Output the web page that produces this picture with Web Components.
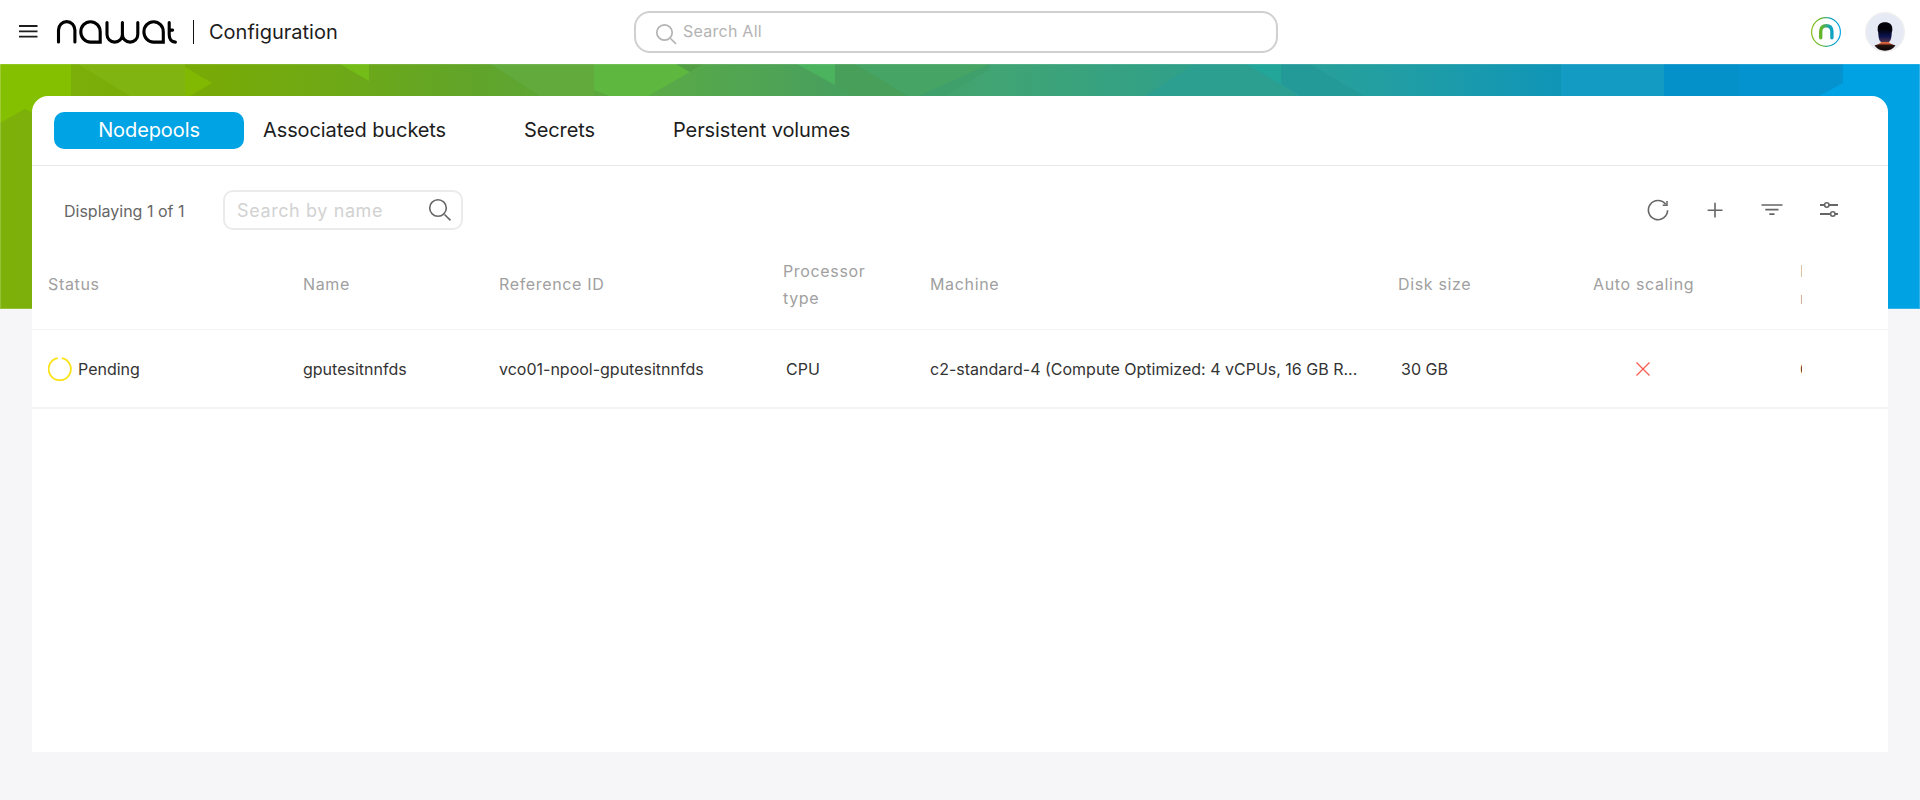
<!DOCTYPE html>
<html lang="en">
<head>
<meta charset="utf-8">
<title>Configuration</title>
<style>
html,body{margin:0;height:100%}
body{font-family:Inter,"Liberation Sans",sans-serif;background:#f6f6f9;overflow:hidden}
</style>
</head>
<body>
<app-shell>
  <app-header slot="header" heading="Configuration"></app-header>
  <brand-banner slot="banner"></brand-banner>
  <content-card>
    <tab-bar slot="tabs">
      <tab-item active style="width:190px">Nodepools</tab-item>
      <tab-item style="width:242px">Associated buckets</tab-item>
      <tab-item style="width:130px">Secrets</tab-item>
      <tab-item style="width:216px">Persistent volumes</tab-item>
    </tab-bar>
    <list-toolbar></list-toolbar>
    <pool-table></pool-table>
  </content-card>
</app-shell>
<script>
const define = (name, html) => customElements.define(name, class extends HTMLElement {
  connectedCallback() {
    if (this.shadowRoot) return;
    const t = document.createElement('template');
    t.innerHTML = typeof html === 'function' ? html(this) : html;
    this.attachShadow({ mode: 'open' }).append(t.content.cloneNode(true));
  }
});

define('app-shell', `
<style>
:host{display:grid;grid-template:64px 245px 1fr/1fr;height:800px}
.header{grid-area:1/1}
.banner{grid-area:2/1;display:grid}
.main{grid-area:2/1/4/2;padding:32px 32px 48px;display:grid;z-index:1}
</style>
<div class="header"><slot name="header"></slot></div>
<div class="banner"><slot name="banner"></slot></div>
<div class="main"><slot></slot></div>`);

define('brand-logo', `
<style>:host{display:block;width:122px;height:26px}svg{display:block}</style>
<svg width="122" height="26" viewBox="56 19 122 26" role="img" aria-label="nawat" fill="none" stroke="#000" stroke-width="3.1" stroke-linecap="round" stroke-linejoin="miter">
<path d="M58.5 42V30a8.2 8.4 0 0 1 16.4 0V42"/>
<path d="M100.2 42.1H90.5a9.7 10.2 0 1 1 9.7-10.2z"/>
<path d="M107 22.5v12a7.7 7.6 0 0 0 15.4 0v-12M122.4 34.5a7.7 7.6 0 0 0 15.4 0v-12"/>
<path d="M163.3 42.1h-9.7a9.7 10.2 0 1 1 9.7-10.2z"/>
<path d="M169.2 22.5v12q0 7.3 6.2 7.6M169.2 30.1h3.4"/>
</svg>`);

define('search-field', el => `
<style>
:host{display:flex;align-items:center;box-sizing:border-box;border:2px solid #d0d0d0;color:#b3b3b3}
span{white-space:nowrap;padding-bottom:var(--label-lift,0)}
</style><slot name="before"></slot><span>${el.getAttribute('placeholder')}</span><slot name="after"></slot>`);

define('app-header', el => `
<style>
:host{display:grid;grid-template-columns:634px 644px 1fr;height:64px;background:#fff;align-items:center}
.left,.right{display:flex;align-items:center;height:64px}
.menu{margin-left:19px}
brand-logo{margin-left:18px}
.rule{width:1px;height:24px;background:#111;margin-left:15px}
.title{margin-left:15px;font-size:20px;color:#1d1d1d;line-height:24px;white-space:nowrap}
search-field{height:42px;border-radius:16px;font-size:16px;padding-left:19px;letter-spacing:.25px;--label-lift:2px}
search-field svg{margin:4px 6px 0 0}
.right{justify-content:flex-end;gap:23px;padding-right:15px}
svg{display:block}
</style>
<div class="left">
<svg class="menu" width="19" height="14" viewBox="0 0 19 14" stroke="#1d1d1d" stroke-width="1.8"><path d="M0 1H18.5M0 6.400H18.5M0 11.600H18.5"/></svg>
<brand-logo></brand-logo><div class="rule"></div><div class="title">${el.getAttribute('heading')}</div>
</div>
<search-field placeholder="Search All"><svg slot="before" width="22" height="22" viewBox="0 0 22 22" fill="none" stroke="#b3b3b3" stroke-width="1.7"><circle cx="9.5" cy="9.5" r="7.7"/><path d="M15.5 15.5 21 20.8"/></svg></search-field>
<div class="right">
<svg width="32" height="32" viewBox="0 0 32 32" fill="none"><defs><linearGradient id="g" gradientUnits="userSpaceOnUse" x1="2" y1="0" x2="30" y2="0"><stop offset="0" stop-color="#86bd17"/><stop offset=".35" stop-color="#62b42e"/><stop offset=".65" stop-color="#16a3b9"/><stop offset="1" stop-color="#00a3e4"/></linearGradient></defs>
<circle cx="16" cy="16" r="14.4" stroke="url(#g)" stroke-width="1.2"/><path d="M10.7 21.8V15.400q0-5.700 5.5-5.700t5.700 5.700v6.400" stroke="url(#g)" stroke-width="3.4" stroke-linecap="round"/></svg>
<svg width="40" height="40" viewBox="0 0 40 40"><defs><linearGradient id="h" x1="0" y1="0" x2="0" y2="1"><stop offset=".35" stop-color="#020208"/><stop offset=".72" stop-color="#0c1450"/><stop offset="1" stop-color="#513249"/></linearGradient><linearGradient id="s" x1="0" y1="0" x2="0" y2="1"><stop offset="0" stop-color="#a44a3a"/><stop offset=".35" stop-color="#e8683f"/><stop offset=".55" stop-color="#25120f"/><stop offset="1" stop-color="#070405"/></linearGradient></defs>
<circle cx="20" cy="20" r="19.3" fill="#e5eaf5" stroke="#efefef" stroke-width="1.4"/>
<path d="M16 27h8v3.500q3 2 6.500 3-4 5.200-10.500 5.200T9.500 33.500q4-1 6.500-3z" fill="url(#s)"/><path d="M20 10.300c4.800 0 7.300 2.600 7.300 6.500 0 1.300.1 2-.5 3.500-.2 4-.8 9.200-3 9.700h-7.600c-2.200-.5-2.800-5.700-3-9.700-.6-1.500-.5-2.200-.5-3.500 0-3.900 2.500-6.500 7.300-6.500z" fill="url(#h)"/></svg>
</div>`);

define('brand-banner', `
<style>:host{display:grid}svg{display:block}</style>
<svg width="1920" height="245" viewBox="0 64 1920 245" preserveAspectRatio="none">
<defs>
<linearGradient id="b" gradientUnits="userSpaceOnUse" x1="0" y1="0" x2="1920" y2="0">
<stop offset="0" stop-color="#7db10a"/><stop offset=".11" stop-color="#77aa07"/><stop offset=".17" stop-color="#6fa915"/><stop offset=".25" stop-color="#60a42a"/><stop offset=".34" stop-color="#5aaa46"/><stop offset=".43" stop-color="#49a05c"/><stop offset=".52" stop-color="#40a474"/><stop offset=".62" stop-color="#30a08a"/><stop offset=".72" stop-color="#239fa2"/><stop offset=".81" stop-color="#1095b7"/><stop offset=".87" stop-color="#048fc7"/><stop offset="1" stop-color="#0494d0"/></linearGradient>
</defs>
<rect y="64" width="1920" height="245" fill="url(#b)"/>
<path d="M0 64H71V134L25 109 0 123z" fill="#84bf00"/>
<path d="M78 64H185V96H130z" fill="#80b411"/>
<path d="M185 67 212 83 190 96H185z" fill="#81b801"/>
<path d="M340 64H369V81z" fill="#74bd18"/>
<path d="M476 64H594V96H540L490 64z" fill="#61aa3b"/>
<path d="M594 64H676L690 72 648 96H610L594 90z" fill="#5eb83f"/>
<path d="M676 64H703L690 72z" fill="#529f43"/>
<path d="M797 64H835V85z" fill="#4bb35e"/>
<path d="M835 64H855L908 96H853L835 85z" fill="#479f59"/>
<path d="M855 64H990L920 96H908z" fill="#46a565"/>
<path d="M990 64V69L945 96H918z" fill="#3fa06b"/>
<path d="M1145 96 1195 64H1245L1297 96z" fill="#2c9f90"/>
<path d="M1246 64H1281V84z" fill="#21a699"/>
<path d="M1281 64H1310L1364 96H1300L1281 84z" fill="#249a98"/>
<path d="M1561 64H1664V96H1561z" fill="#149bc4"/>
<path d="M1664 64H1739V96H1664z" fill="#0490c8"/>
<path d="M1739 64H1843V96H1739z" fill="#0493ce"/>
<path d="M1843 64H1920V309H1888V140L1860 96H1819L1843 83z" fill="#00a2e3"/>
<path d="M.5 64V308.500H1919.500V64" fill="none" stroke="#fff" stroke-opacity=".2"/>
<path d="M0 64.500H1920" stroke="#fff" stroke-opacity=".12"/>
</svg>`);

define('content-card', `
<style>
:host{display:flex;flex-direction:column;background:#fff;border-radius:16px 16px 0 0;min-width:0}
</style><slot name="tabs"></slot><slot></slot>`);

define('tab-bar', `
<style>:host{display:flex;gap:0;height:69px;border-bottom:1px solid #e8e8e8;padding:0 22px;align-items:flex-start}
::slotted(*){margin-top:16px}</style><slot></slot>`);

define('tab-item', `
<style>
:host{display:flex;align-items:center;justify-content:center;height:37px;border-radius:10px;font-size:20px;letter-spacing:-.1px;color:#1d1d1d;white-space:nowrap;box-sizing:border-box;padding-bottom:2px}
:host([active]){background:#00a3e4;color:#fff}
:host(:not([active])){justify-content:flex-start;margin-left:19px;padding-right:0}
</style><slot></slot>`);

define('list-toolbar', `
<style>
:host{display:flex;height:64px;padding:24px 47px 0 32px;box-sizing:border-box;align-items:center}
.count{width:159px;font-size:16px;color:#666;white-space:nowrap;padding-top:1px}
search-field{width:240px;height:40px;border-color:#ebebeb;border-radius:10px;color:#d2d2d2;font-size:18px;letter-spacing:.6px;padding:0 9px 0 12px;justify-content:space-between}
.tools{margin-left:auto;display:flex;gap:33px;align-items:center}
svg{display:block;fill:none;stroke:#666;stroke-width:1.6}
</style>
<div class="count">Displaying 1 of 1</div>
<search-field placeholder="Search by name"><svg slot="after" width="24" height="24" viewBox="0 0 24 24"><circle cx="10" cy="10" r="8.300"/><path d="M16.500 16.500 22.500 22.300"/></svg></search-field>
<div class="tools">
<svg width="24" height="24" viewBox="0 0 24 24"><path d="M19.600 6.200A9.600 9.600 0 1 0 21.600 12.300"/><path d="M21 3v4.200h-4.300" stroke-width="1.500"/></svg>
<svg width="24" height="24" viewBox="0 0 24 24"><path d="M12 4.700V19.500M4.600 12.200H19.500"/></svg>
<svg width="24" height="24" viewBox="0 0 24 24"><path d="M1.500 7H22.500M5.300 11.700H18.500M9.300 16.200H14.500" stroke-width="1.700"/></svg>
<svg width="24" height="24" viewBox="0 0 24 24"><path d="M3 7H7.500M12 7H21M3 16H13.500M18 16H21" stroke-width="1.900"/><circle cx="9.800" cy="7" r="2.200"/><circle cx="15.800" cy="16" r="2.200"/></svg>
</div>`);

define('pool-row', `
<style>
:host{display:grid;grid-template-columns:255px 196px 284px 147px 468px 195px 207px 2px;padding-left:16px;align-items:center;box-sizing:border-box;white-space:nowrap}
</style><slot></slot>`);

define('pool-table', `
<style>
:host{display:block}
.head{height:100px;border-bottom:1px solid #f4f4f6;color:#a0a0a0;font-size:16px;letter-spacing:.65px;line-height:27px;padding-top:10px}
.row{height:79px;border-bottom:2px solid #f3f3f5;color:#333;font-size:16px;line-height:24px}
.wrap{width:90px;white-space:normal}
.clip{overflow:hidden;width:2px}
.status{display:flex;align-items:center;gap:6px}
.inset{padding-left:3px}
.machine{width:430px;overflow:hidden;text-overflow:ellipsis}
.mark{width:99px;display:flex;justify-content:center}
svg{display:block;fill:none}
</style>
<pool-row class="head"><div>Status</div><div>Name</div><div>Reference ID</div><div class="wrap">Processor type</div><div>Machine</div><div>Disk size</div><div>Auto scaling</div><div class="clip">Min<br>nodes</div></pool-row>
<pool-row class="row">
<div class="status"><svg width="24" height="24" viewBox="0 0 24 24" stroke="#fbe31c" stroke-width="1.800"><path d="M13.700 1.100A11.100 11.100 0 1 1 9.800 1.100"/></svg><span>Pending</span></div>
<div>gputesitnnfds</div><div>vco01-npool-gputesitnnfds</div><div class="inset">CPU</div>
<div class="machine">c2-standard-4 (Compute Optimized: 4 vCPUs, 16 GB R...</div><div class="inset">30 GB</div>
<div class="mark"><svg width="14" height="14" viewBox="0 0 14 14" stroke="#f85c50" stroke-width="1.300"><path d="M.5.500 13.500 13.500M13.500.500.500 13.500"/></svg></div><div class="clip">0</div>
</pool-row>`);
</script>
</body>
</html>
